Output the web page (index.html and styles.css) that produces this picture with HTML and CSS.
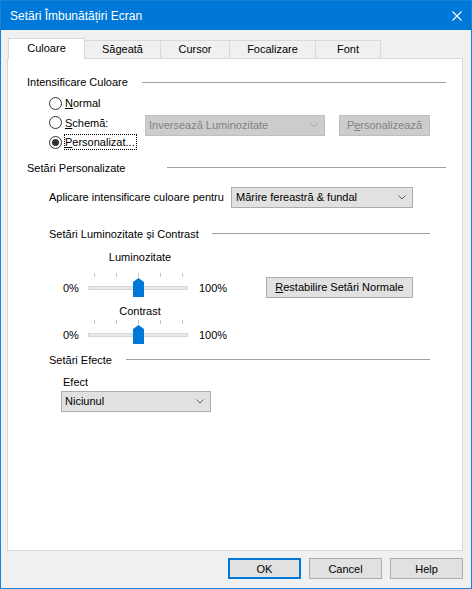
FILE: index.html
```html
<!DOCTYPE html>
<html lang="ro">
  <head>
    <meta charset="UTF-8" />
    <meta name="viewport" content="width=device-width, initial-scale=1.0" />
    <title>Setări Îmbunătățiri Ecran</title>
    <link rel="stylesheet" href="styles.css">
  </head>
  <body>
    <div class="window">
      <div class="titlebar">
        <span class="title">Setări Îmbunătățiri Ecran</span>
        <svg class="close" width="10" height="10" viewBox="0 0 10 10">
          <path d="M0.5 0.5L9.5 9.5M9.5 0.5L0.5 9.5" stroke="#fff" stroke-width="1.1" fill="none" />
        </svg>
      </div>

      <div class="client">
        <div class="tabs">
          <div class="tab tab-active tab-culoare">Culoare</div>
          <div class="tab tab-sageata">Săgeată</div>
          <div class="tab tab-cursor">Cursor</div>
          <div class="tab tab-focus">Focalizare</div>
          <div class="tab tab-font">Font</div>
        </div>

        <div class="panel">
          <div class="group-hdr">
            <span class="hdr-label hdr-culoare">Intensificare Culoare</span>
            <span class="rule"></span>
          </div>

          <div class="radios">
            <div class="radio">
              <span class="dot"></span>
              <span class="radio-label"><u>N</u>ormal</span>
            </div>
            <div></div>
            <div></div>

            <div class="radio">
              <span class="dot"></span>
              <span class="radio-label"><u>S</u>chemă:</span>
            </div>
            <div class="combo combo-disabled combo-scheme">
              <span>Inversează Luminozitate</span>
              <svg class="chev" width="8" height="5" viewBox="0 0 8 5"><path d="M0.5 0.5L4 4L7.5 0.5" /></svg>
            </div>
            <div class="btn btn-disabled btn-custom">P<u>e</u>rsonalizează</div>

            <div class="radio">
              <span class="dot dot-checked"></span>
              <span class="radio-label focus-box"><u>P</u>ersonalizat...</span>
            </div>
            <div></div>
            <div></div>
          </div>

          <div class="group-hdr hdr-gap">
            <span class="hdr-label hdr-pers">Setări Personalizate</span>
            <span class="rule"></span>
          </div>

          <div class="apply-row">
            <span class="apply-label">Aplicare intensificare culoare pentru</span>
            <div class="combo combo-apply">
              <span>Mărire fereastră &amp; fundal</span>
              <svg class="chev" width="8" height="5" viewBox="0 0 8 5"><path d="M0.5 0.5L4 4L7.5 0.5" /></svg>
            </div>
          </div>

          <div class="group-hdr sub-hdr hdr-bright-gap">
            <span class="hdr-label hdr-bright">Setări Luminozitate și Contrast</span>
            <span class="rule"></span>
          </div>

          <div class="bright-block">
            <div class="slider-col">
              <div class="slider-caption">Luminozitate</div>
              <div class="slider-row slider-first">
                <span class="pct pct-min">0%</span>
                <div class="slider">
                  <div class="ticks"><i></i><i></i><i></i><i></i><i></i></div>
                  <div class="track"></div>
                  <svg class="thumb" width="11" height="19" viewBox="0 0 11 19"><path d="M0 4L5.5 0L11 4V19H0Z" /></svg>
                </div>
                <span class="pct pct-max">100%</span>
              </div>

              <div class="slider-caption caption-contrast">Contrast</div>
              <div class="slider-row slider-second">
                <span class="pct pct-min">0%</span>
                <div class="slider">
                  <div class="ticks"><i></i><i></i><i></i><i></i><i></i></div>
                  <div class="track"></div>
                  <svg class="thumb" width="11" height="19" viewBox="0 0 11 19"><path d="M0 4L5.5 0L11 4V19H0Z" /></svg>
                </div>
                <span class="pct pct-max">100%</span>
              </div>
            </div>
            <div class="btn btn-reset"><u>R</u>estabilire Setări Normale</div>
          </div>

          <div class="group-hdr sub-hdr hdr-effects-gap">
            <span class="hdr-label hdr-effects">Setări Efecte</span>
            <span class="rule"></span>
          </div>

          <div class="effect-label">Efect</div>
          <div class="combo combo-effect">
            <span>Niciunul</span>
            <svg class="chev" width="8" height="5" viewBox="0 0 8 5"><path d="M0.5 0.5L4 4L7.5 0.5" /></svg>
          </div>
        </div>

        <div class="buttons">
          <div class="btn btn-dialog btn-default">OK</div>
          <div class="btn btn-dialog">Cancel</div>
          <div class="btn btn-dialog">Help</div>
        </div>
      </div>
    </div>
  </body>
</html>
```

FILE: styles.css
```css
* {
  box-sizing: border-box;
}

body {
  margin: 0;
  font-family: "Segoe UI", "Liberation Sans", Arial, sans-serif;
  font-size: 11px;
  color: #000;
  background-color: #f0f0f0;
}

.window {
  width: 472px;
  height: 589px;
  border: 1px solid #1883d7;
  background-color: #f0f0f0;
  display: flex;
  flex-direction: column;
}

.titlebar {
  height: 29px;
  background-color: #0078d7;
  color: #fff;
  font-size: 12px;
  display: flex;
  align-items: center;
  justify-content: space-between;
  padding: 0 9px 0 9px;
}

.close {
  display: block;
}

.client {
  padding: 8px 8px 0 6px;
}

/* tabs */

.tabs {
  display: flex;
  align-items: flex-end;
  height: 20px;
  padding-left: 1px;
}

.tab {
  height: 18px;
  border: 1px solid #d9d9d9;
  border-bottom: none;
  background-color: #f0f0f0;
  margin-left: -1px;
  text-align: center;
  line-height: 16px;
}

.tab:first-child {
  margin-left: 0;
}

.tab-active {
  height: 21px;
  margin-bottom: -1px;
  background-color: #fff;
  position: relative;
  z-index: 1;
  line-height: 18px;
}

.tab-culoare { width: 77px; }
.tab-sageata { width: 77px; }
.tab-cursor { width: 70px; }
.tab-focus { width: 87px; }
.tab-font { width: 66px; }

.panel {
  height: 493px;
  background-color: #fff;
  border: 1px solid #d9d9d9;
  padding: 15px 16px 0 19px;
}

/* group headers */

.group-hdr {
  display: flex;
  align-items: center;
  height: 16px;
}

.hdr-label {
  flex: none;
  white-space: nowrap;
}

.rule {
  flex: 1;
  height: 1px;
  background-color: #a0a0a0;
}

.sub-hdr {
  margin-left: 22px;
  margin-right: 16px;
}

.hdr-culoare { width: 115px; }
.hdr-pers { width: 140px; }
.hdr-bright { width: 163px; }
.hdr-effects { width: 77px; }

.hdr-gap { margin-top: 7.5px; }
.hdr-bright-gap { margin-top: 18px; }
.hdr-effects-gap { margin-top: 8px; }

/* radios */

.radios {
  display: grid;
  grid-template-columns: 82px 180px 91px;
  grid-auto-rows: 19.5px;
  column-gap: 14px;
  margin: 3.5px 0 0 22px;
}

.radio {
  display: flex;
  align-items: center;
}

.dot {
  flex: none;
  width: 13px;
  height: 13px;
  border: 1px solid #333;
  border-radius: 50%;
  background-color: #fff;
  display: flex;
  align-items: center;
  justify-content: center;
}

.dot-checked::after {
  content: "";
  width: 7px;
  height: 7px;
  border-radius: 50%;
  background-color: #333;
}

.radio-label {
  flex: none;
  margin-left: 3px;
  line-height: 14px;
  white-space: nowrap;
}

.focus-box {
  margin-left: 2px;
  border: 1px dotted #000;
  padding-right: 1px;
}

/* combos and buttons */

.combo {
  display: flex;
  align-items: center;
  justify-content: space-between;
  height: 21px;
  background-color: #e1e1e1;
  border: 1px solid #adadad;
  padding: 0 6px 0 3px;
}

.chev {
  display: block;
}

.chev path {
  fill: none;
  stroke: #606060;
  stroke-width: 1;
}

.combo-disabled {
  background-color: #cccccc;
  border-color: #bfbfbf;
  color: #838383;
}

.combo-disabled .chev path {
  stroke: #a8a8a8;
}

.combo-scheme,
.btn-custom {
  align-self: start;
  margin-top: 1.5px;
}

.btn {
  height: 21px;
  background-color: #e1e1e1;
  border: 1px solid #adadad;
  display: flex;
  align-items: center;
  justify-content: center;
}

.btn-disabled {
  background-color: #cccccc;
  border-color: #bfbfbf;
  color: #838383;
}

.apply-row {
  display: flex;
  align-items: center;
  margin: 11px 0 0 22px;
}

.apply-label {
  width: 182px;
}

.combo-apply {
  width: 182px;
  padding-left: 4px;
}

/* brightness / contrast */

.bright-block {
  display: flex;
  align-items: flex-start;
  margin: 7px 0 0 36px;
}

.slider-col {
  width: 170px;
}

.slider-caption {
  height: 16px;
  line-height: 16px;
  width: 100px;
  margin-left: 27px;
  text-align: center;
}

.caption-contrast {
  margin-top: 6px;
}

.slider-row {
  display: flex;
  align-items: center;
  height: 24px;
}

.slider-first { margin-top: 8px; }
.slider-second { margin-top: 1px; }

.pct {
  padding-top: 6px;
  line-height: 14px;
}

.pct-min { width: 25px; }
.pct-max { margin-left: 11px; }

.slider {
  position: relative;
  width: 100px;
  height: 24px;
}

.ticks {
  display: flex;
  justify-content: space-between;
  padding: 0 5px 0 6px;
  height: 4px;
}

.ticks i {
  width: 1px;
  height: 4px;
  background-color: #c4c4c4;
}

.track {
  margin-top: 9px;
  height: 4px;
  border: 1px solid #d6d6d6;
  background-color: #e7eaea;
}

.thumb {
  position: absolute;
  left: 45px;
  top: 5px;
  display: block;
}

.thumb path {
  fill: #0078d7;
}

.btn-reset {
  width: 147px;
  margin: 28px 0 0 33px;
}

/* effects */

.effect-label {
  height: 16px;
  line-height: 16px;
  margin: 6px 0 0 36px;
}

.combo-effect {
  width: 150px;
  margin: 1px 0 0 34px;
}

/* dialog buttons */

.buttons {
  display: flex;
  justify-content: flex-end;
  gap: 8px;
  margin-top: 7px;
}

.btn-dialog {
  width: 73px;
}

.btn-default {
  border: 2px solid #0078d7;
}
```
